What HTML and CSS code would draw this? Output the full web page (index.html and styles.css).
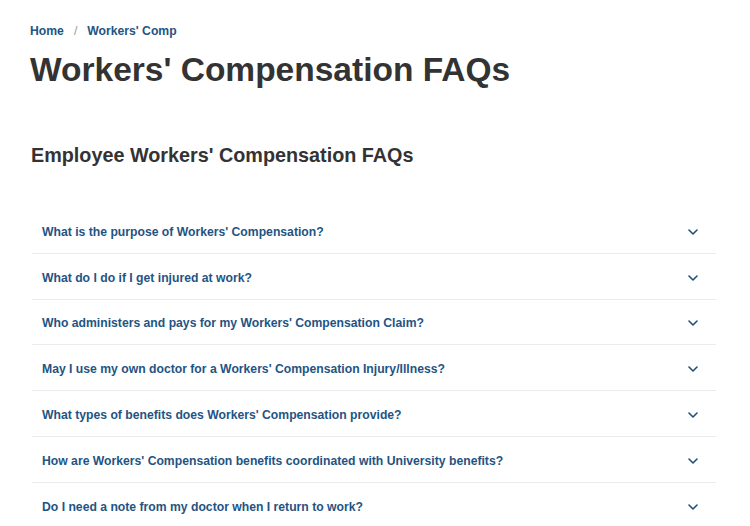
FILE: index.html
```html
<!DOCTYPE html>
<html lang="en">
<head>
<meta charset="utf-8">
<title>Workers' Compensation FAQs</title>
<link rel="stylesheet" href="styles.css">
</head>
<body>
<div class="page">
  <nav class="breadcrumb">
    <a href="#">Home</a>
    <span class="sep">/</span>
    <a href="#">Workers' Comp</a>
  </nav>
  <h1 class="title">Workers' Compensation FAQs</h1>
  <h2 class="subtitle">Employee Workers' Compensation FAQs</h2>
  <div class="accordion">
    <div class="item"><span class="q">What is the purpose of Workers' Compensation?</span><svg class="chev" viewBox="0 0 10 6" width="10" height="6"><path d="M1 1l4 4 4-4"/></svg></div>
    <div class="item"><span class="q">What do I do if I get injured at work?</span><svg class="chev" viewBox="0 0 10 6" width="10" height="6"><path d="M1 1l4 4 4-4"/></svg></div>
    <div class="item"><span class="q">Who administers and pays for my Workers' Compensation Claim?</span><svg class="chev" viewBox="0 0 10 6" width="10" height="6"><path d="M1 1l4 4 4-4"/></svg></div>
    <div class="item"><span class="q">May I use my own doctor for a Workers' Compensation Injury/Illness?</span><svg class="chev" viewBox="0 0 10 6" width="10" height="6"><path d="M1 1l4 4 4-4"/></svg></div>
    <div class="item"><span class="q">What types of benefits does Workers' Compensation provide?</span><svg class="chev" viewBox="0 0 10 6" width="10" height="6"><path d="M1 1l4 4 4-4"/></svg></div>
    <div class="item"><span class="q">How are Workers' Compensation benefits coordinated with University benefits?</span><svg class="chev" viewBox="0 0 10 6" width="10" height="6"><path d="M1 1l4 4 4-4"/></svg></div>
    <div class="item"><span class="q">Do I need a note from my doctor when I return to work?</span><svg class="chev" viewBox="0 0 10 6" width="10" height="6"><path d="M1 1l4 4 4-4"/></svg></div>
  </div>
</div>
</body>
</html>
```
FILE: styles.css
```css
html, body {
  margin: 0;
  padding: 0;
  background: #ffffff;
}
body {
  font-family: "Liberation Sans", Arial, Helvetica, sans-serif;
  color: #333333;
}
.page {
  padding: 23px 34px 0 30px;
}
.breadcrumb {
  font-size: 12.2px;
  font-weight: bold;
  line-height: 16px;
  display: flex;
  align-items: center;
}
.breadcrumb a {
  color: #1f5483;
  text-decoration: none;
}
.sep {
  color: #999999;
  font-weight: normal;
  margin: 0 10px 0 10px;
}
.title {
  margin: 11px 0 0 0;
  font-size: 33.5px;
  line-height: 40px;
  font-weight: bold;
  color: #333333;
}
.subtitle {
  margin: 53px 0 0 1px;
  font-size: 19.8px;
  line-height: 24px;
  font-weight: bold;
  color: #333333;
}
.accordion {
  margin: 41px 0 0 2px;
}
.item {
  display: flex;
  align-items: center;
  justify-content: space-between;
  height: 41.8px;
  padding: 3px 18px 0 10px;
  border-bottom: 1px solid #ebebeb;
}
.q {
  font-size: 12.2px;
  font-weight: bold;
  color: #1f5483;
}
.chev {
  fill: none;
  stroke: #1f4f79;
  stroke-width: 1.6;
  stroke-linecap: round;
  stroke-linejoin: round;
}
```
